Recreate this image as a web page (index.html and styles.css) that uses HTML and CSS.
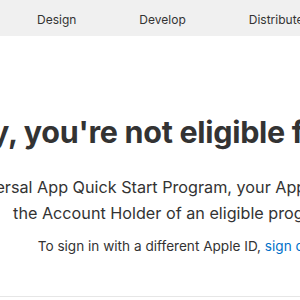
FILE: index.html
```html
<!DOCTYPE html>
<html lang="en">
<head>
  <meta charset="UTF-8">
  <meta name="viewport" content="width=device-width, initial-scale=1.0">
  <title>Universal App Quick Start Program</title>
  <link rel="stylesheet" href="styles.css">
</head>
<body>

  <!-- NAV
   ================================================== -->
  <nav class="localnav">
    <ul class="localnav-menu">
      <li><a href="#">Design</a></li>
      <li><a href="#">Develop</a></li>
      <li><a href="#">Distribute</a></li>
      <li><a href="#">Support</a></li>
      <li><a href="#">Account</a></li>
    </ul>
  </nav>

  <!-- MENSAJE
   ================================================== -->
  <main class="main">
    <section class="notice">
      <h1 class="notice-title">Sorry, you're not eligible for this program.</h1>
      <p class="notice-copy">
        To participate in the Universal App Quick Start Program, your Apple ID must be associated with the Admin, or as<br>
        the Account Holder of an eligible program's membership.
      </p>
      <p class="notice-signout">To sign in with a different Apple ID, <a href="#">sign out</a> and sign in here.</p>
    </section>
  </main>

  <footer class="footer"></footer>
</body>
</html>
```

FILE: styles.css
```css
* { font-family: 'Inter', 'Liberation Sans', sans-serif; }

html, body {
  margin: 0;
  overflow: hidden;
}
body {
  background: #fff;
  color: #333;
}

.localnav {
  background: #f0f0f0;
  height: 36px;
}
  .localnav-menu {
    display: flex;
    gap: 63px;
    height: 36px;
    align-items: center;
    list-style: none;
    margin: 0;
    padding: 0 0 0 37px;
    white-space: nowrap;
  }
    .localnav-menu a {
      color: #333;
      font-size: 12px;
      text-decoration: none;
    }

.main {
  margin-left: -218px;
  width: 900px;
}
  .notice {
    padding-top: 78px;
    text-align: center;
  }
    .notice-title {
      color: #333;
      font-size: 30.5px;
      font-weight: 700;
      letter-spacing: -0.01em;
      line-height: 36px;
      margin: 0;
      white-space: nowrap;
    }
    .notice-copy {
      font-size: 16.2px;
      line-height: 26px;
      margin: 24px 0 0;
      white-space: nowrap;
    }
    .notice-signout {
      font-size: 13.6px;
      line-height: 20px;
      margin: 10px 0 0;
      white-space: nowrap;
    }
      .notice-signout a {
        color: #0070c9;
        text-decoration: none;
      }

.footer {
  border-top: 1px solid #e6e6e6;
  margin-top: 40px;
}
```
